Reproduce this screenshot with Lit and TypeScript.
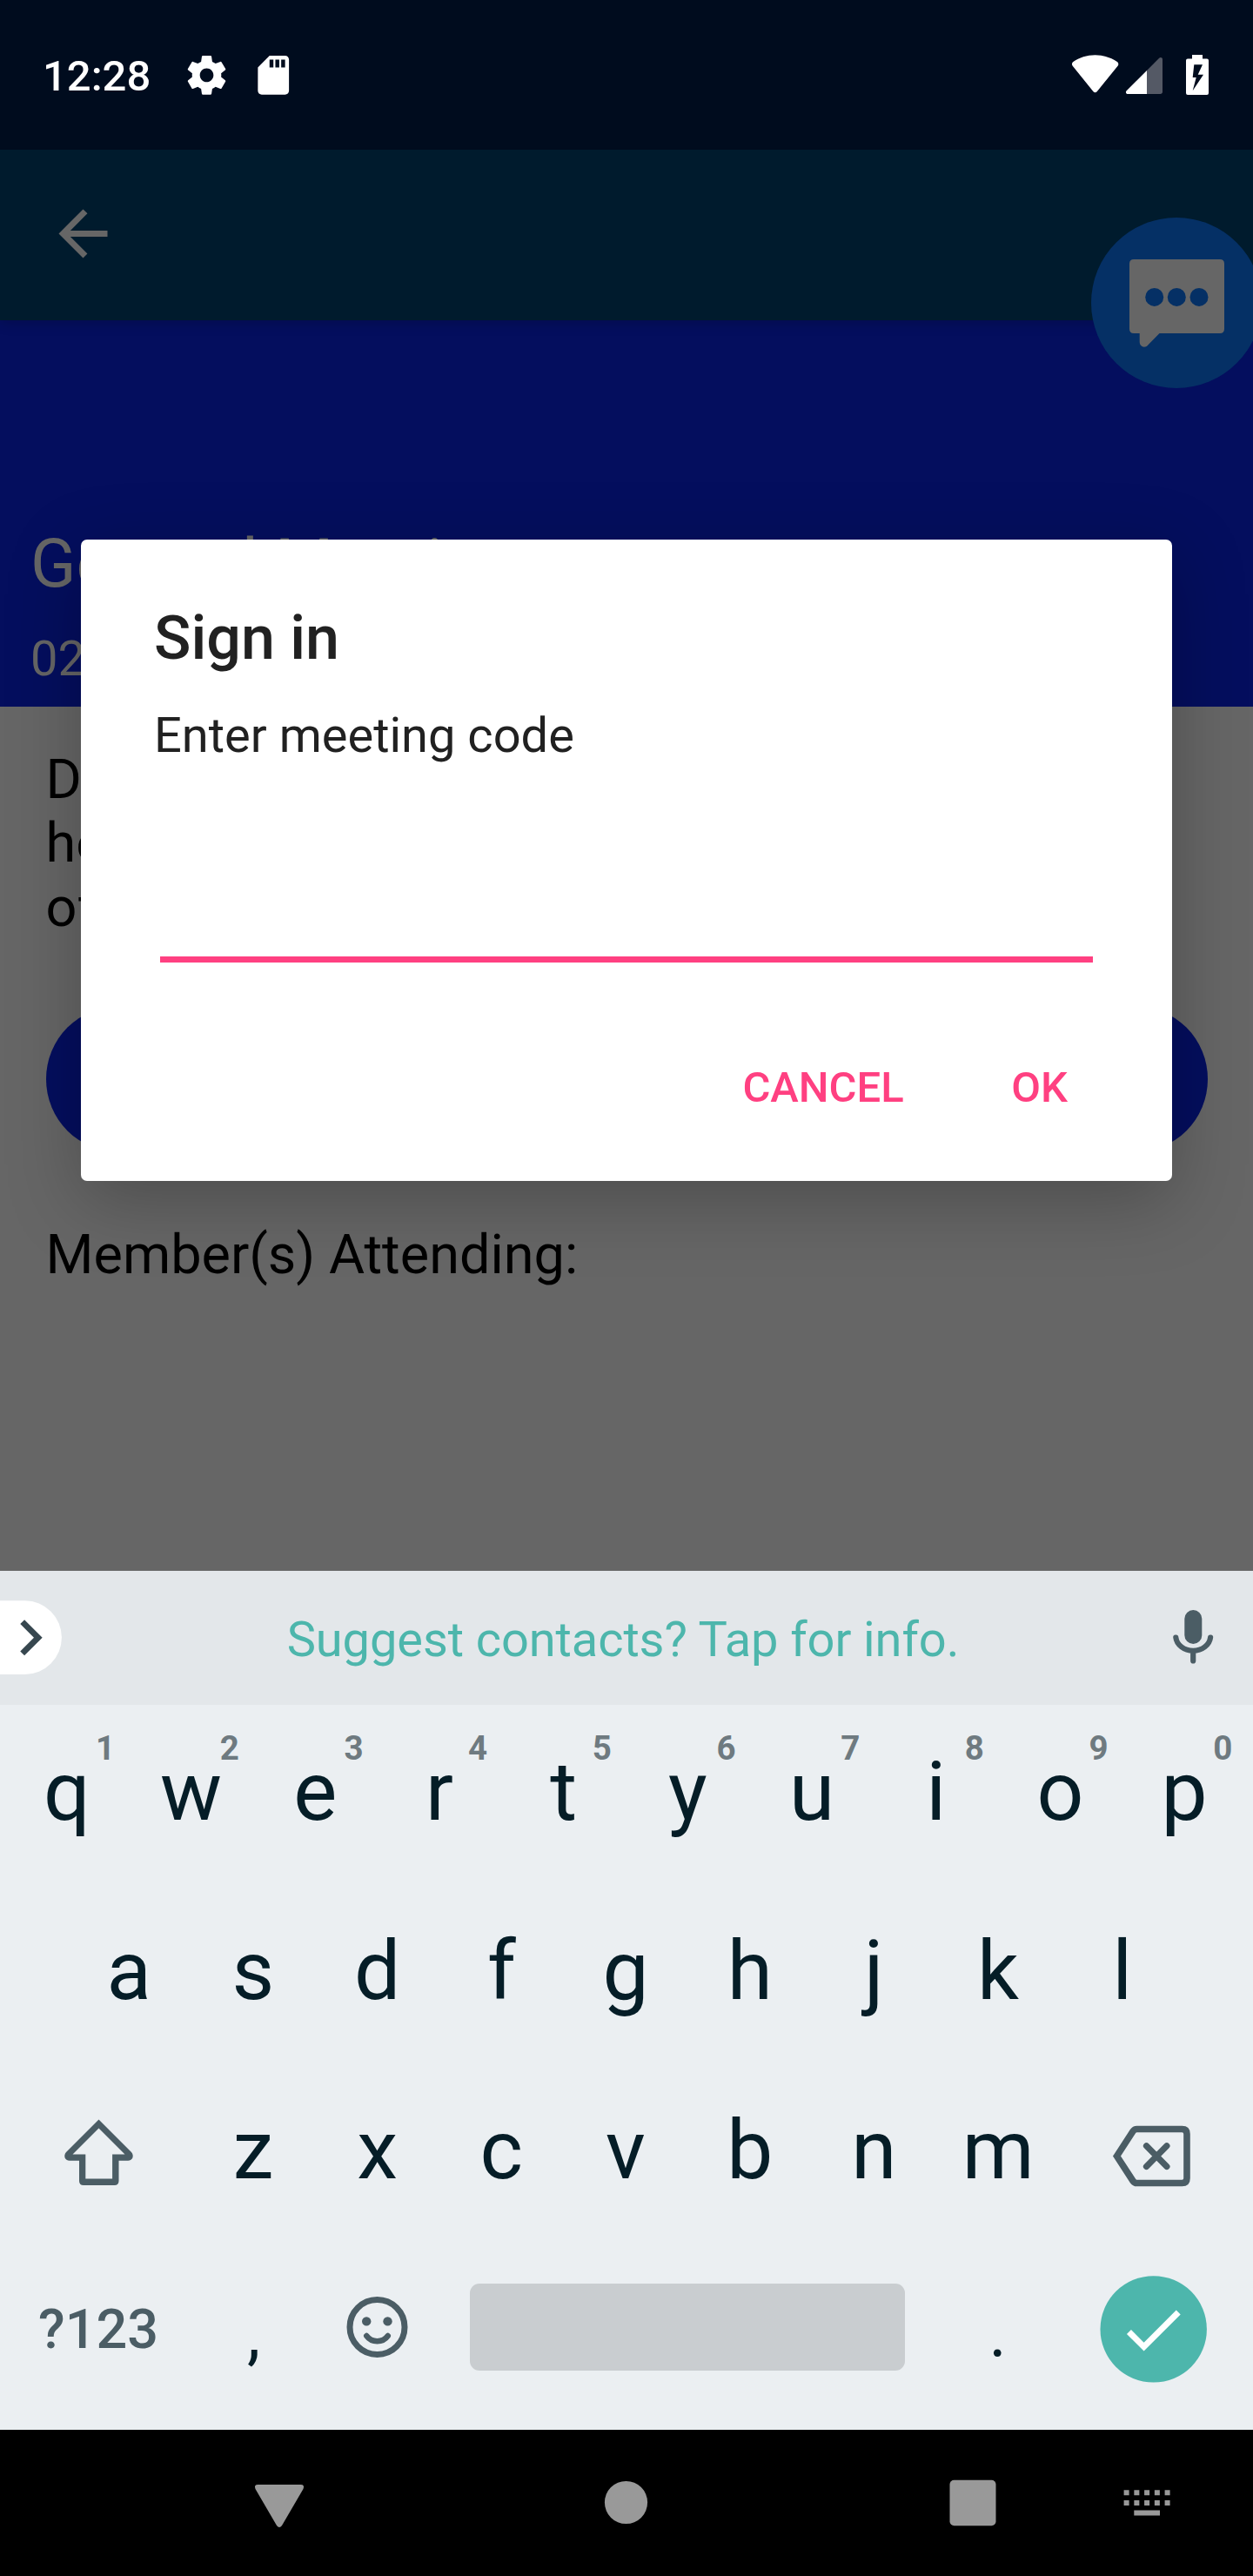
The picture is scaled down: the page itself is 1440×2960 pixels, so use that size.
import { LitElement, html, css } from "lit";
import { customElement, property } from "lit/decorators.js";

@customElement("status-bar")
class StatusBar extends LitElement {
  static styles = css`
    :host { display: flex; height: 172px; background: #000c1e; color: #fff; box-sizing: border-box; }
    .time { padding: 59px 0 0 49px; width: 211px; box-sizing: border-box; white-space: nowrap; font-size: 49px; line-height: 58px; font-weight: 500; }
    svg { display: block; height: 172px; flex: none; }
    .spacer { flex: 1; }
  `;
  render() {
    return html`
      <div class="time">12:28</div>
      <svg width="140" viewBox="211 0 140 172" fill="#fff">
        <g transform="translate(210.7 59.6) scale(2.235)">
          <path fill-rule="evenodd" d="M19.43 12.98c.04-.32.07-.64.07-.98s-.03-.66-.07-.98l2.11-1.65c.19-.15.24-.42.12-.64l-2-3.46c-.12-.22-.39-.3-.61-.22l-2.49 1c-.52-.4-1.08-.73-1.69-.98l-.38-2.65A.488.488 0 0 0 14 2h-4c-.25 0-.46.18-.49.42l-.38 2.65c-.61.25-1.17.59-1.69.98l-2.49-1c-.23-.09-.49 0-.61.22l-2 3.46c-.13.22-.07.49.12.64l2.11 1.65c-.04.32-.07.65-.07.98s.03.66.07.98l-2.11 1.65c-.19.15-.24.42-.12.64l2 3.46c.12.22.39.3.61.22l2.49-1c.52.4 1.08.73 1.69.98l.38 2.65c.03.24.24.42.49.42h4c.25 0 .46-.18.49-.42l.38-2.65c.61-.25 1.17-.59 1.69-.98l2.49 1c.23.09.49 0 .61-.22l2-3.46c.12-.22.07-.49-.12-.64l-2.11-1.65zM12 15.5c-1.93 0-3.5-1.57-3.5-3.5s1.57-3.5 3.5-3.5 3.500 1.570 3.500 3.500-1.570 3.500-3.500 3.500z" />
        </g>
        <g transform="translate(287.4 59.6) scale(2.235)">
          <path fill-rule="evenodd" d="M18 2h-8L4.020 8 4 20c0 1.100.9 2 2 2h12c1.100 0 2-.9 2-2V4c0-1.100-.9-2-2-2zm-6 6h-2V4h2v4zm3 0h-2V4h2v4zm3 0h-2V4h2v4z" />
        </g>
      </svg>
      <div class="spacer"></div>
      <svg width="220" viewBox="1220 0 220 172" fill="#fff">
        <path d="M1258.600 63.300c-9.500 0-18.300 2.900-25.200 7.700-1.600 1.200-1.900 3.200-.7 4.700l23.600 29.400c1.200 1.600 3.400 1.600 4.600 0l23.700-29.400c1.200-1.500.9-3.500-.7-4.700-6.900-4.800-15.800-7.700-25.300-7.700z" />
        <path fill="#545965" d="M1318 81l14.200-14.300c1.500-1.500 3.800-.7 3.800 1.500v37.300c0 1.500-1 2.500-2.500 2.500H1318z" />
        <path d="M1318 81v27h-21.800c-2.200 0-3-2.300-1.500-3.800z" />
        <path fill-rule="evenodd" d="M1370 63h12v4.400h5q2 0 2 2V107q0 2-2 2h-22q-2 0-2-2V69.400q0-2 2-2h5zM1372.300 74.300l-1.600 14.700h4l-4 15.300L1383 85.700h-6.300l5.300-11.400z" />
      </svg>
    `;
  }
}

@customElement("meeting-screen")
class MeetingScreen extends LitElement {
  static styles = css`
    :host { display: flex; flex-direction: column; height: 1633px; background: #666; position: relative; overflow: hidden; }
    .toolbar { height: 196px; background: #001b2d; flex: none; box-shadow: 0 3px 14px rgba(0, 0, 0, 0.18); z-index: 1; }
    .toolbar svg { display: block; }
    .hero { height: 444px; box-sizing: border-box; padding: 235px 35px 0; background: #040e5e; color: #666; flex: none; }
    .title { font-size: 77px; line-height: 90px; }
    .date { font-size: 56px; line-height: 66px; margin-top: 31px; }
    .body { padding: 47px 52.5px 0; color: #000; font-size: 63px; line-height: 73.3px; }
    .action { height: 168px; border-radius: 84px; background: #040e5e; margin: 77px 0 81.500px; }
    .members { line-height: 74px; }
    .chat { position: absolute; left: 1254px; top: 78px; width: 186px; height: 196px; z-index: 2; }
  `;
  render() {
    return html`
      <div class="toolbar">
        <svg width="196" height="196" viewBox="0 172 196 196">
          <path transform="translate(53.500 226.400) scale(3.500)" fill="#666" d="M20 11H7.830l5.590-5.590L12 4l-8 8 8 8 1.410-1.410L7.830 13H20v-2z" />
        </svg>
      </div>
      <div class="hero">
        <div class="title">General Meeting</div>
        <div class="date">02</div>
      </div>
      <div class="body">
        <div>D</div>
        <div>he</div>
        <div>of</div>
        <div class="action"></div>
        <div class="members">Member(s) Attending:</div>
      </div>
      <svg class="chat" viewBox="1254 250 186 196">
        <circle cx="1352" cy="348" r="98" fill="#053065" />
        <path fill="#666" d="M1303 298h99q5 0 5 5v75q0 5-5 5h-69.500l-13.500 13.800c-3.500 4-9.300 1.500-9.300-4V383H1303q-5 0-5-5v-75q0-5 5-5z" />
        <g fill="#053065"><circle cx="1326.700" cy="341.400" r="10.500" /><circle cx="1352.300" cy="341.400" r="10.500" /><circle cx="1378" cy="341.400" r="10.500" /></g>
      </svg>
    `;
  }
}

@customElement("sign-in-dialog")
class SignInDialog extends LitElement {
  static styles = css`
    :host { display: block; box-sizing: border-box; width: 1254px; height: 737px; padding-top: 72px; background: #fff; border-radius: 7px; color: #212121; box-shadow: 0 22px 84px rgba(0, 0, 0, 0.25); }
    .title { margin-left: 84px; font-size: 70px; line-height: 82px; font-weight: 500; }
    .message { margin: 38px 0 0 84px; font-size: 56px; line-height: 66px; }
    .field { height: 228px; margin: 0 91px; box-sizing: border-box; border-bottom: 7px solid #ff4081; }
    .actions { display: flex; justify-content: flex-end; gap: 123.500px; margin: 115px 120px 0 0; color: #ff4081; font-size: 49px; line-height: 58px; font-weight: 500; }
  `;
  render() {
    return html`
      <div class="title">Sign in</div>
      <div class="message">Enter meeting code</div>
      <div class="field"></div>
      <div class="actions"><span>CANCEL</span><span>OK</span></div>
    `;
  }
}

@customElement("letter-key")
class LetterKey extends LitElement {
  @property() label = "";
  @property() hint = "";
  static styles = css`
    :host { display: block; position: relative; width: 142.700px; height: 206px; flex: none; text-align: center; }
    .label { font-size: 94.500px; line-height: 199px; color: #051d27; }
    .hint { position: absolute; left: 95.500px; width: 40px; top: 26.500px; font-size: 38.500px; line-height: 46px; font-weight: 700; color: #6e7a80; }
  `;
  render() {
    return html`<div class="label">${this.label}</div>${this.hint ? html`<div class="hint">${this.hint}</div>` : ""}`;
  }
}

@customElement("soft-keyboard")
class SoftKeyboard extends LitElement {
  static styles = css`
    :host { display: block; height: 987px; background: #ebeff2; }
    .strip { display: flex; align-items: center; height: 154px; background: #e3e7ea; }
    .strip svg, .row svg { display: block; flex: none; }
    .suggest { width: 1232px; text-align: center; font-size: 56px; line-height: 66px; letter-spacing: -0.100px; color: #4db6ac; white-space: nowrap; padding-top: 3px; box-sizing: border-box; }
    .row { display: flex; justify-content: center; height: 206px; padding-right: 2px; }
    .symbols { width: 214px; text-align: center; font-size: 63px; line-height: 199px; font-weight: 500; color: #4b5d65; }
    .punct { width: 142.700px; text-align: center; font-size: 77px; line-height: 210px; color: #051d27; }
    .space { width: 500px; height: 100px; margin: 47px 35px 0 35.400px; border-radius: 11px; background: #c9cdd0; }
  `;
  private keys(letters: string, hints = "") {
    return [...letters].map((c, i) => html`<letter-key label=${c} hint=${hints[i] ?? ""}></letter-key>`);
  }
  render() {
    return html`
      <div class="strip">
        <svg width="100" height="154" viewBox="0 1805 100 154">
          <path fill="#fff" d="M0 1839.300h28.700a42.300 42.300 0 0 1 0 84.600H0z" />
          <path transform="translate(-6.200 1840.600) scale(3.430)" fill="#37474f" d="M10 6 8.590 7.410 13.170 12l-4.580 4.590L10 18l6-6z" />
        </svg>
        <div class="suggest">Suggest contacts? Tap for info.</div>
        <svg width="108" height="154" viewBox="1332 1805 108 154">
          <rect x="1361.300" y="1850" width="20" height="39" rx="10" fill="#4b5d65" />
          <path d="M1351.300 1881.500a20 17 0 0 0 39.800 0M1371.200 1899v9.500" fill="none" stroke="#4b5d65" stroke-width="6.200" stroke-linecap="round" />
        </svg>
      </div>
      <div class="row">${this.keys("qwertyuiop", "1234567890")}</div>
      <div class="row">${this.keys("asdfghjkl")}</div>
      <div class="row">
        <svg width="214" height="206" viewBox="5.500 2371 214 206">
          <path fill="#4b5d65" fill-rule="evenodd" d="M113 2435.500l37.500 37.500c3.500 4 1.500 9.800-4 9.800H136v23.200q0 5-5 5H95.500q-5 0-5-5v-23.200H79.500c-5.500 0-7.500-5.800-4-9.800zM113 2445.400l-30 30.100h14.800v28h30.800v-28H143z" />
        </svg>
        ${this.keys("zxcvbnm")}
        <svg width="214" height="206" viewBox="1218.500 2371 214 206">
          <g fill="none" stroke="#4b5d65" stroke-width="7.600" stroke-linejoin="miter" stroke-linecap="round">
            <path d="M1284 2477.500l18.500-28.500q1.700-2.500 4.500-2.500h52q5.500 0 5.500 5.500v51q0 5.500-5.500 5.500h-52q-2.800 0-4.500-2.500z" />
            <path stroke-width="7.200" d="M1318 2465.700l23.400 23.800M1341.400 2465.700l-23.400 23.800" />
          </g>
        </svg>
      </div>
      <div class="row">
        <div class="symbols">?123</div>
        <div class="punct">,</div>
        <svg width="142" height="206" viewBox="362.500 2577 142 206">
          <circle cx="433" cy="2674" r="31.500" fill="none" stroke="#4b5d65" stroke-width="7" />
          <g fill="#4b5d65"><circle cx="420.700" cy="2667.400" r="5.200" /><circle cx="445" cy="2667.400" r="5.200" /></g>
          <path d="M420.700 2684q4.500 6.200 12.300 6.200t12.300-6.200" fill="none" stroke="#4b5d65" stroke-width="6.400" stroke-linecap="round" />
        </svg>
        <div class="space"></div>
        <div class="punct">.</div>
        <svg width="214" height="206" viewBox="1217.900 2577 214 206">
          <circle cx="1325.600" cy="2676.400" r="61.200" fill="#4db6ac" />
          <path transform="translate(1282.900 2634.900) scale(3.510)" fill="#fff" d="M9 16.170 4.830 12l-1.420 1.410L9 19 21 7l-1.410-1.410z" />
        </svg>
      </div>
    `;
  }
}

@customElement("nav-bar")
class NavBar extends LitElement {
  static styles = css`
    :host { display: flex; box-sizing: border-box; height: 168px; padding-left: 271px; background: #000; }
    svg { display: block; width: 100px; height: 168px; fill: #999; flex: none; }
    .home { margin-left: 298px; }
    .recent { margin-left: 299px; }
    .ime { margin-left: 100px; }
  `;
  render() {
    const cells = [0, 1, 2, 3, 4].flatMap((c) => [0, 1].map((r) => ({ x: 1291.6 + c * 11.75, y: 2861.2 + r * 11.75 })));
    const dots = cells.map((p) => `M${p.x} ${p.y}h6v6h-6z`).join("");
    return html`
      <svg viewBox="271 2792 100 168"><path d="M296.500 2855h49q5 0 3 5l-24.500 42q-3 4-6 0l-24.500-42q-2-5 3-5z" /></svg>
      <svg class="home" viewBox="669 2792 100 168"><circle cx="719.500" cy="2875.500" r="24.600" /></svg>
      <svg class="recent" viewBox="1068 2792 100 168"><rect x="1091.500" y="2849.800" width="53" height="52.500" rx="5" /></svg>
      <svg class="ime" viewBox="1268 2792 100 168"><path d="${dots}M1303.300 2884.600h29.700v6h-29.700z" /></svg>
    `;
  }
}

@customElement("app-root")
class AppRoot extends LitElement {
  static styles = css`
    :host { display: flex; flex-direction: column; position: relative; width: 1440px; height: 2960px; overflow: hidden; font-family: Roboto, "Liberation Sans", sans-serif; }
    .dialog { position: absolute; left: 93px; top: 620px; }
    soft-keyboard { position: relative; }
  `;
  render() {
    return html`
      <status-bar></status-bar>
      <meeting-screen></meeting-screen>
      <sign-in-dialog class="dialog"></sign-in-dialog>
      <soft-keyboard></soft-keyboard>
      <nav-bar></nav-bar>
    `;
  }
}
